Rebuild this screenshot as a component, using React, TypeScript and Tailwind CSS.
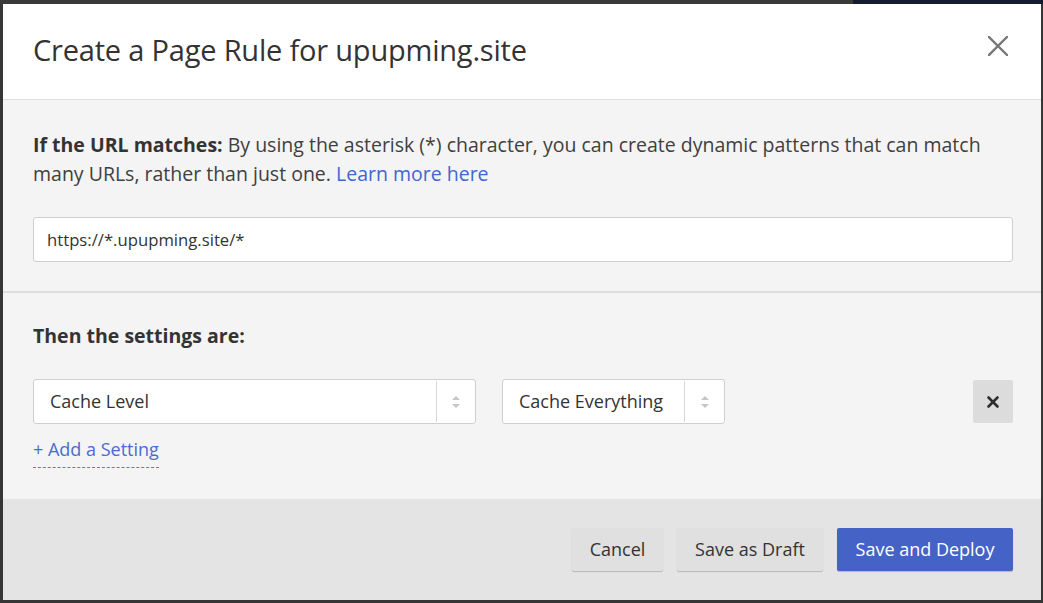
import { X } from 'lucide-react'

function SelectBox({ label, width, split }: { label: string; width: string; split: string }) {
  return (
    <div className={`flex h-[45px] ${width} items-stretch rounded-[3px] border border-[#cfcfcf] bg-white`}>
      <div className="flex flex-1 items-center pl-4 text-[18px] text-[#333]">{label}</div>
      <div className={`my-[1px] flex ${split} items-center justify-center border-l border-[#d6d6d6]`}>
        <svg width="10" height="18" viewBox="0 0 10 18">
          <path d="M5 3 L9 7 H1 Z" fill="#c6c6c6" />
          <path d="M5 15 L9 11 H1 Z" fill="#c6c6c6" />
        </svg>
      </div>
    </div>
  )
}

export default function App() {
  return (
    <div
      className="flex h-[603px] w-[1043px] flex-col overflow-hidden bg-[#363636]"
      style={{ fontFamily: '"Open Sans", sans-serif' }}
    >
      <div className="flex h-[4px] shrink-0">
        <div className="flex-1 bg-[#3a3a3a]" />
        <div className="w-[190px] bg-[#161c30]" />
      </div>
      <div className="flex h-[596px] w-[1038px] ml-[3px] flex-col bg-white">
        {/* header */}
        <div className="flex h-[96px] items-center justify-between border-b border-[#dedede] pb-[4px] pl-[30px] pr-[33px]">
          <h1 className="text-[29px] font-normal tracking-[-0.2px] text-[#333]">Create a Page Rule for upupming.site</h1>
          <button type="button" aria-label="Close" className="mb-[8px]">
            <svg width="20" height="20" viewBox="0 0 20 20">
              <path d="M1 1 L19 19 M19 1 L1 19" stroke="#777" strokeWidth="2.4" strokeLinecap="square" />
            </svg>
          </button>
        </div>

        {/* url section */}
        <div className="border-b-2 border-[#dedede] bg-[#f4f4f4] pb-[29px] pl-[30px] pr-[28px] pt-[30px]">
          <p className="text-[19.5px] leading-[29px] text-[#404040]">
            <span className="font-bold text-[#333]">If the URL matches:</span> By using the asterisk (*) character, you can
            create dynamic patterns that can match
            <br />
            many URLs, rather than just one. <span className="text-[#3f66d1]">Learn more here</span>
          </p>
          <div className="mt-[29px] flex h-[45px] items-center rounded-[3px] border border-[#cfcfcf] bg-white pl-[13px] text-[16.7px] text-[#333]">
            https://*.upupming.site/*
          </div>
        </div>

        {/* settings section */}
        <div className="flex-1 bg-[#f4f4f4] pl-[30px] pr-[28px] pt-[28px]">
          <p className="text-[19.5px] font-bold leading-[29px] text-[#333]">Then the settings are:</p>
          <div className="mt-[29px] flex items-center">
            <SelectBox label="Cache Level" width="w-[443px]" split="w-[39px]" />
            <div className="ml-[26px]">
              <SelectBox label="Cache Everything" width="w-[223px]" split="w-[40px]" />
            </div>
            <button
              type="button"
              className="ml-auto flex h-[43px] w-[40px] items-center justify-center rounded-[2px] bg-[#dcdcdc] text-[#2e2e2e]"
              aria-label="Remove"
            >
              <X size={18} strokeWidth={3.5} />
            </button>
          </div>
          <div className="mt-[12px]">
            <span className="border-b border-dashed border-[#5a78d6] pb-[6px] text-[18px] text-[#4a6bd3]">+ Add a Setting</span>
          </div>
        </div>

        {/* footer */}
        <div className="flex h-[101px] items-center justify-end gap-[14px] bg-[#e4e4e4] pr-[28px]">
          <button
            type="button"
            className="h-[43px] w-[91px] rounded-[2px] bg-[#e0e0e0] text-[18px] text-[#333] shadow-[0_1px_1px_rgba(0,0,0,0.2)]"
          >
            Cancel
          </button>
          <button
            type="button"
            className="h-[43px] w-[146px] rounded-[2px] bg-[#e0e0e0] text-[18px] text-[#333] shadow-[0_1px_1px_rgba(0,0,0,0.2)]"
          >
            Save as Draft
          </button>
          <button
            type="button"
            className="h-[43px] w-[176px] rounded-[2px] bg-[#4563c6] text-[18px] text-white shadow-[0_1px_1px_rgba(0,0,0,0.2)]"
          >
            Save and Deploy
          </button>
        </div>
      </div>
    </div>
  )
}
